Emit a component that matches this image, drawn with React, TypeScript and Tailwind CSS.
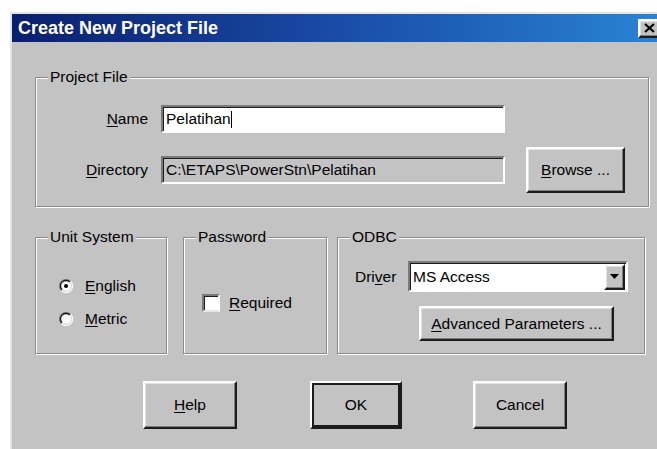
import type { ReactNode } from "react";

const raised =
  "border-2 border-t-white border-l-white border-r-[#1c1c1c] border-b-[#1c1c1c] shadow-[inset_-1px_-1px_0_#808080,inset_1px_1px_0_#e2e2e2] bg-[#c3c3c3]";
const sunken =
  "border-2 border-t-[#7a7a7a] border-l-[#7a7a7a] border-r-white border-b-white shadow-[inset_1px_1px_0_#1c1c1c]";

function Key({ children }: { children: ReactNode }) {
  return <u className="underline underline-offset-[2px] decoration-1">{children}</u>;
}

function Group({
  title,
  className,
  children,
}: {
  title: string;
  className?: string;
  children: ReactNode;
}) {
  return (
    <fieldset
      className={`border border-[#8a8a8a] shadow-[1px_1px_0_#fff,inset_1px_1px_0_#fff] ${className ?? ""}`}
    >
      <legend className="ml-[12px] px-[2px] leading-[16px] bg-[#c3c3c3]">{title}</legend>
      {children}
    </fieldset>
  );
}

function Button({
  children,
  className,
  isDefault,
}: {
  children: ReactNode;
  className?: string;
  isDefault?: boolean;
}) {
  return (
    <button
      type="button"
      className={`flex items-center justify-center ${raised} ${
        isDefault ? "outline-2 outline-[#1c1c1c] -outline-offset-4" : ""
      } ${className ?? ""}`}
    >
      {children}
    </button>
  );
}

function Radio({ checked }: { checked?: boolean }) {
  return (
    <svg width="14" height="14" viewBox="0 0 14 14">
      <circle cx="7" cy="7" r="5.5" fill="#fff" />
      <path d="M2.4 11.6 A6.5 6.5 0 0 1 11.6 2.4" stroke="#808080" strokeWidth="1.3" fill="none" />
      <path d="M3.1 10.9 A5.5 5.5 0 0 1 10.9 3.1" stroke="#111" strokeWidth="1.3" fill="none" />
      <path d="M11.6 2.4 A6.5 6.5 0 0 1 2.4 11.6" stroke="#fff" strokeWidth="1.3" fill="none" />
      <path d="M10.9 3.1 A5.5 5.5 0 0 1 3.1 10.9" stroke="#dcdcdc" strokeWidth="1.3" fill="none" />
      {checked && <circle cx="7" cy="7" r="2" fill="#000" />}
    </svg>
  );
}

export default function App() {
  return (
    <div className="w-[657px] h-[449px] overflow-hidden bg-white font-['Liberation_Sans',Arial,sans-serif] text-[15.5px] text-black">
      <div className="ml-[10px] mt-[12px] w-[663px] h-[460px] bg-[#c3c3c3] border-t-2 border-l-2 border-t-[#e4e4e4] border-l-[#e4e4e4]">
        {/* caption bar */}
        <div className="h-[28px] flex items-center pl-[6px] pr-[13px] bg-linear-to-r from-[#0a1f6c] via-[#1a4ca8] to-[#2a86d6]">
          <span className="text-white font-bold text-[18px] leading-none">Create New Project File</span>
          <button
            type="button"
            className={`ml-auto w-[22px] h-[19px] flex items-center justify-center ${raised}`}
          >
            <svg width="11" height="10" viewBox="0 0 11 10">
              <path d="M1 1 L10 9 M10 1 L1 9" stroke="#000" strokeWidth="2.2" />
            </svg>
          </button>
        </div>

        <Group title="Project File" className="ml-[23px] mt-[27px] w-[614px] pb-[13px]">
          <div className="flex items-center mt-[20px]">
            <span className="w-[112px] text-right">
              <Key>N</Key>ame
            </span>
            <div className={`ml-[13px] w-[344px] h-[28px] bg-white flex items-center pl-[3px] ${sunken}`}>
              Pelatihan
              <span className="w-px h-[17px] bg-black" />
            </div>
          </div>
          <div className="flex items-center mt-[14px]">
            <span className="w-[112px] text-right">
              <Key>D</Key>irectory
            </span>
            <div className={`ml-[13px] w-[344px] h-[28px] flex items-center pl-[3px] ${sunken}`}>
              C:\ETAPS\PowerStn\Pelatihan
            </div>
            <Button className="ml-[21px] w-[99px] h-[46px]">
              <span>
                <Key>B</Key>rowse ...
              </span>
            </Button>
          </div>
        </Group>

        <div className="flex ml-[23px] mt-[22px]">
          <Group title="Unit System" className="w-[132px]">
            <div className="flex items-center mt-[31px] h-[20px] pl-[23px] gap-[12px]">
              <Radio checked />
              <span>
                <Key>E</Key>nglish
              </span>
            </div>
            <div className="flex items-center mt-[13px] h-[20px] pl-[23px] gap-[12px]">
              <Radio />
              <span>
                <Key>M</Key>etric
              </span>
            </div>
          </Group>

          <Group title="Password" className="ml-[16px] w-[144px]">
            <div className="flex items-center mt-[46px] pl-[18px] gap-[9px]">
              <div className="w-[18px] h-[18px] bg-white border-2 border-t-[#7a7a7a] border-l-[#7a7a7a] border-r-white border-b-[#e6e6e6] shadow-[inset_1px_1px_0_#1c1c1c]" />
              <span>
                <Key>R</Key>equired
              </span>
            </div>
          </Group>

          <Group title="ODBC" className="ml-[10px] w-[308px] pb-[12px]">
            <div className="flex items-center mt-[16px] pl-[17px]">
              <span className="w-[42px]">
                Dri<Key>v</Key>er
              </span>
              <div className={`ml-[11px] w-[220px] h-[31px] bg-white flex items-center ${sunken}`}>
                <span className="pl-[3px]">MS Access</span>
                <div className={`ml-auto mr-px w-[21px] h-[26px] flex items-center justify-center ${raised}`}>
                  <svg width="9" height="5" viewBox="0 0 9 5">
                    <path d="M0 0 H9 L4.5 5 Z" fill="#000" />
                  </svg>
                </div>
              </div>
            </div>
            <Button className="ml-[81px] mt-[14px] w-[195px] h-[35px]">
              <span>
                <Key>A</Key>dvanced Parameters ...
              </span>
            </Button>
          </Group>
        </div>

        <div className="flex ml-[131px] mt-[27px]">
          <Button className="w-[94px] h-[48px]">
            <span>
              <Key>H</Key>elp
            </span>
          </Button>
          <Button isDefault className="ml-[73px] w-[92px] h-[48px]">
            OK
          </Button>
          <Button className="ml-[71px] w-[94px] h-[48px]">Cancel</Button>
        </div>
      </div>
    </div>
  );
}
